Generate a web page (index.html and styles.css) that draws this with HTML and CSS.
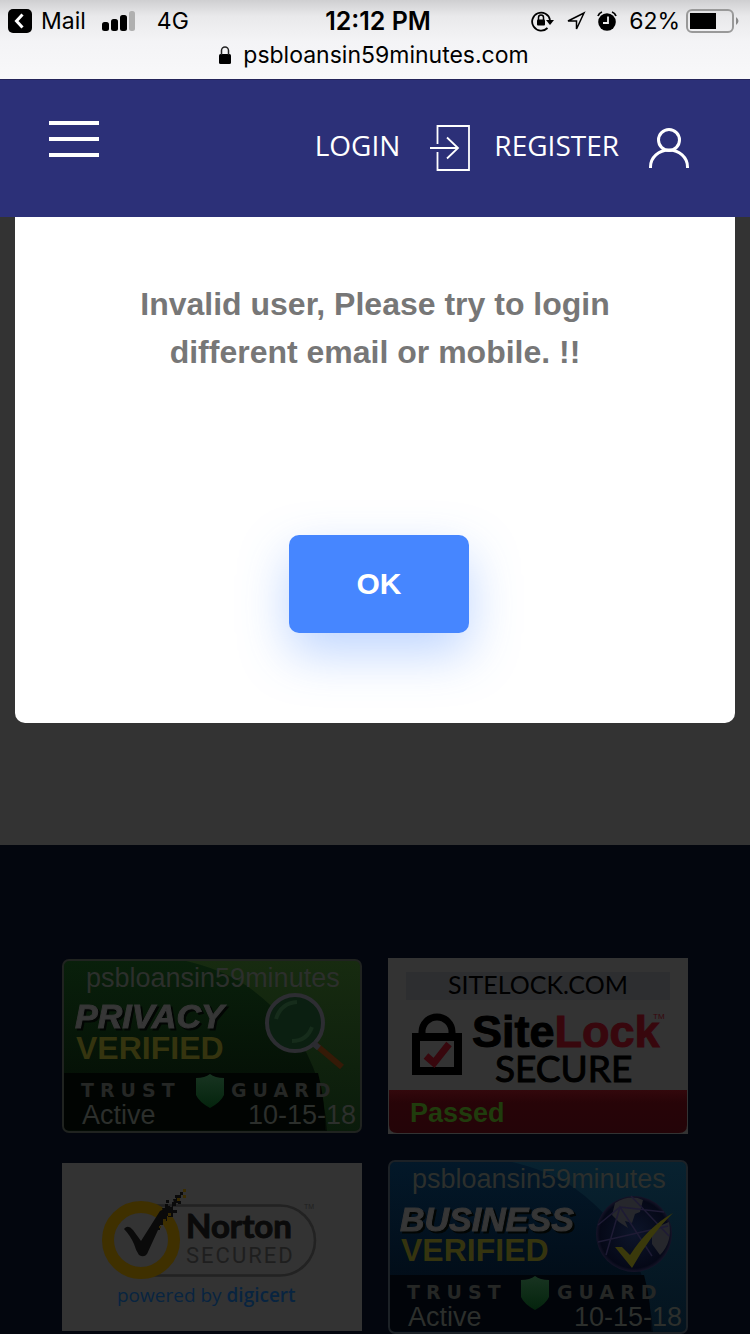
FILE: index.html
```html
<!DOCTYPE html>
<html lang="en">
<head>
<meta charset="utf-8">
<meta name="viewport" content="width=device-width, initial-scale=1">
<title>psbloansin59minutes.com</title>
<link rel="stylesheet" href="styles.css">
</head>
<body>
<div class="chrome">
  <div class="status">
    <div class="status-left">
      <button class="back" type="button">
        <svg width="24" height="24" viewBox="0 0 24 24" aria-hidden="true"><rect width="24" height="24" rx="5"/><path d="M14.500 5.500L8.500 12L14.500 18.500" fill="none" stroke="#fff" stroke-width="3"/></svg>
        Mail
      </button>
      <svg width="34" height="20" viewBox="0 0 34 20" aria-hidden="true"><rect y="11" width="7" height="9" rx="2.500"/><rect x="9" y="8" width="7" height="12" rx="2.500"/><rect x="18" y="4" width="7" height="16" rx="2.500"/><rect x="27" width="6" height="20" rx="2.500" fill="#b0b0b0"/></svg>
      <span class="network">4G</span>
    </div>
    <span class="time">12:12 PM</span>
    <div class="status-right">
      <svg class="lock-rotate" width="24" height="22" viewBox="0 0 24 22" aria-hidden="true"><path d="M16.500 18A9 9 0 1 1 19 10" fill="none" stroke="#000" stroke-width="1.800"/><path d="M15 10H23L19 15Z"/><rect x="6" y="9.500" width="8" height="6" rx="1"/><path d="M7.500 10V7.500a2.500 2.500 0 0 1 5 0V10" fill="none" stroke="#000" stroke-width="1.500"/></svg>
      <svg class="locate" width="20" height="20" viewBox="0 0 20 20" aria-hidden="true"><path d="M18 2L2 10H10.500V18Z" fill="none" stroke="#000" stroke-width="1.500"/></svg>
      <svg class="alarm" width="20" height="20" viewBox="0 0 20 20" aria-hidden="true"><circle cx="10" cy="11" r="8.800"/><path d="M1 5Q2 2 5 1M19 5Q18 2 15 1" fill="none" stroke="#000" stroke-width="1.800"/><path d="M11 5.500V12H6" fill="none" stroke="#eee" stroke-width="1.800"/></svg>
      <span>62%</span>
      <svg width="54" height="24" viewBox="0 0 54 24" aria-hidden="true"><rect x="1" y="1" width="46" height="22" rx="5" fill="none" stroke="#999" stroke-width="2"/><rect x="4" y="4" width="26" height="16"/><path d="M50 8Q55 12 50 16Z" fill="#888"/></svg>
    </div>
  </div>
  <div class="address">
    <svg width="12" height="18" viewBox="0 0 12 18" aria-hidden="true"><rect y="8" width="12" height="10" rx="1.500"/><path d="M2.500 9V4.500a3.500 3.500 0 0 1 7 0V9" fill="none" stroke="#222" stroke-width="1.500"/></svg>
    <span>psbloansin59minutes.com</span>
  </div>
</div>

<header class="site-header">
  <button class="menu" type="button" aria-label="Menu"><span></span><span></span><span></span></button>
  <nav class="account">
    <a href="#login">LOGIN
      <svg width="40" height="46" viewBox="0 0 40 46" aria-hidden="true"><g fill="none" stroke="#fff" stroke-width="1.800"><path d="M7.500 19V1H39V45H7.500V27"/><path d="M0 23H27M17 12.500L28 23L17 33.500"/></g></svg>
    </a>
    <a href="#register">REGISTER
      <svg width="40" height="42" viewBox="0 0 40 42" aria-hidden="true"><g fill="none" stroke="#fff" stroke-width="3"><circle cx="20" cy="13" r="10.500"/><path d="M1.500 41V40A18.500 17 0 0 1 38.500 40V41"/></g></svg>
    </a>
  </nav>
</header>

<main class="page">
  <section class="dialog" role="alertdialog" aria-labelledby="message">
    <h2 id="message" class="message">Invalid user, Please try to login different email or mobile. !!</h2>
    <div class="actions"><button class="ok" type="button">OK</button></div>
  </section>
</main>

<footer class="seals">
  <svg class="seal" viewBox="0 0 300 174" role="img" aria-label="Privacy verified">
    <defs>
      <linearGradient id="green" x1="0" y1="0" x2="0" y2="1"><stop offset="0" stop-color="#09200b"/><stop offset="1" stop-color="#030a04"/></linearGradient>
      <linearGradient id="lime" x1="0" y1="0" x2="0" y2="1"><stop offset="0" stop-color="#172b10"/><stop offset="1" stop-color="#0a1b0b"/></linearGradient>
      <linearGradient id="shield" x1="0" y1="0" x2="0" y2="1"><stop offset="0" stop-color="#183421"/><stop offset="1" stop-color="#04240d"/></linearGradient>
    </defs>
    <rect x="1" y="1" width="298" height="172" rx="6" fill="url(#green)"/>
    <path d="M120 1H293Q299 1 299 7V167Q299 173 293 173H265Q260 80 185 27Q160 10 120 1Z" fill="url(#lime)"/>
    <path d="M2 114H256Q263 140 263 171H2Z" fill="#010402"/>
    <rect x="1" y="1" width="298" height="172" rx="6" fill="none" stroke="#202320" stroke-width="2"/>
    <circle cx="233" cy="64" r="28" fill="#0b1f11" stroke="#2d2d32" stroke-width="4"/>
    <path d="M214 60Q219 44 235 43M250 68Q245 82 230 82" fill="none" stroke="#162c1b" stroke-width="4"/>
    <path d="M254 86L280 108" stroke="#351a07" stroke-width="6"/><path d="M251 84L257 89" stroke="#2b2b30" stroke-width="6"/>
    <text class="domain" x="24" y="28">psbloansin59minutes</text>
    <text class="impact" x="13" y="69">PRIVACY</text>
    <text class="verified" x="14" y="100">VERIFIED</text>
    <text class="brand" x="19" y="138">TRUST</text><text class="brand" x="169" y="138">GUARD</text>
    <path d="M134 119Q143 119 148 115Q153 119 162 119V136Q159 143 148 149Q137 143 134 136Z" fill="url(#shield)"/>
    <text class="domain" x="20" y="165">Active</text><text class="domain end" x="294" y="165">10-15-18</text>
  </svg>

  <svg class="seal" viewBox="0 0 300 176" role="img" aria-label="SiteLock secure">
    <defs><linearGradient id="red" x1="0" y1="0" x2="0" y2="1"><stop offset="0" stop-color="#33080c"/><stop offset="0.300" stop-color="#270408"/><stop offset="1" stop-color="#240408"/></linearGradient></defs>
    <rect width="300" height="176" fill="#333"/>
    <rect x="18" y="14" width="264" height="28" fill="#2d2e30"/>
    <text class="site-domain" x="60" y="36">SITELOCK.COM</text>
    <path d="M34 76V74A15 15 0 0 1 64 74V76" fill="none" stroke="#000" stroke-width="7"/>
    <rect x="28" y="79" width="42" height="34" fill="none" stroke="#000" stroke-width="8"/>
    <path d="M38 98L46 105L61 86" fill="none" stroke="#38070d" stroke-width="7"/>
    <text class="sitelock" x="84" y="89">Site<tspan class="lock-red">Lock</tspan></text>
    <text class="tm lock-red" x="265" y="61">TM</text>
    <text class="secure" x="107" y="124">SECURE</text>
    <path d="M1 132H299V167Q299 175 291 175H9Q1 175 1 167Z" fill="url(#red)"/>
    <text class="passed" x="22" y="164">Passed</text>
  </svg>

  <svg class="seal" viewBox="0 0 300 168" role="img" aria-label="Norton secured">
    <rect width="300" height="168" fill="#333"/>
    <path d="M92 42.500H218A35 35 0 0 1 218 112.500H92" fill="none" stroke="#222" stroke-width="2.500"/>
    <circle cx="79" cy="77" r="33" fill="#333" stroke="#3f3000" stroke-width="12"/>
    <path d="M62 66Q66 61 71 67L79 78L98 48L102 46L104 43H108V46H111V50H108V53H105V58H101V62H98V67H96L85 91Q82 95 77 92Q74 88 72 81Q68 72 62 66Z" fill="#0a0a0a"/>
    <path d="M100 45h3v-4h3v3h4v-5h4v4h-3v4h4v3h-4v4h-5v-3h-4zM104 37h3v3h-3zM111 36h3v-3h4v3h-2v4h-4zM116 38h3v3h-3zM113 32h6v3h-6zM118 29h3v3h-3z" fill="#0a0a0a"/>
    <path d="M121 26h3v3h-3zM121 32h3v3h-3zM115 35h3v3h-3zM106 50h3v3h-3zM101 56h3v3h-3zM97 63h2v2h-2z" fill="#3b2d02"/>
    <text class="norton" x="124" y="75">Norton</text>
    <text class="secured" x="124" y="100">SECURED</text>
    <text class="norton-tm" x="242" y="46">TM</text>
    <text class="powered" x="55" y="139">powered by <tspan class="digicert">digicert</tspan></text>
  </svg>

  <svg class="seal" viewBox="0 0 300 174" role="img" aria-label="Business verified">
    <defs>
      <linearGradient id="navy" x1="0" y1="0" x2="0" y2="1"><stop offset="0" stop-color="#031829"/><stop offset="1" stop-color="#010811"/></linearGradient>
      <linearGradient id="cyan" x1="0" y1="0" x2="0" y2="1"><stop offset="0" stop-color="#082230"/><stop offset="1" stop-color="#04131e"/></linearGradient>
      <radialGradient id="globe"><stop offset="0" stop-color="#0d152a"/><stop offset="0.900" stop-color="#050817"/><stop offset="1" stop-color="#161428"/></radialGradient>
    </defs>
    <rect x="1" y="1" width="298" height="172" rx="6" fill="url(#navy)"/>
    <path d="M120 1H293Q299 1 299 7V167Q299 173 293 173H265Q260 80 185 27Q160 10 120 1Z" fill="url(#cyan)"/>
    <path d="M2 115H256Q263 140 263 171H2Z" fill="#010409"/>
    <rect x="1" y="1" width="298" height="172" rx="6" fill="none" stroke="#1c2126" stroke-width="2"/>
    <circle cx="246" cy="74" r="38" fill="url(#globe)"/>
    <path d="M227 43Q242 34 255 40L252 52L247 54L244 63L237 61L240 68L231 62L224 55ZM264 69L281 62Q285 82 272 95L264 84Z" fill="#26272c"/>
    <path d="M210 65L232 47L276 52M210 82L280 66M218 95L232 47L264 96M243 36L281 76" fill="none" stroke="#1e1b34" stroke-width="1.500"/>
    <path d="M227 87H234L242 95Q260 67 285 53Q263 74 244 108Z" fill="#3a390b"/>
    <text class="domain" x="24" y="28">psbloansin59minutes</text>
    <text class="impact" x="12" y="71">BUSINESS</text>
    <text class="verified" x="13" y="101">VERIFIED</text>
    <text class="brand" x="19" y="139">TRUST</text><text class="brand" x="169" y="139">GUARD</text>
    <path d="M133 120Q142 120 147 116Q152 120 161 120V137Q158 144 147 150Q136 144 133 137Z" fill="url(#shield)"/>
    <text class="domain" x="20" y="166">Active</text><text class="domain end" x="294" y="166">10-15-18</text>
  </svg>
</footer>
</body>
</html>
```
FILE: styles.css
```css
* { box-sizing: border-box; }
body {
  margin: 0;
  background: #333;
  font-family: "Liberation Sans", Arial, sans-serif;
}
button {
  margin: 0;
  padding: 0;
  border: 0;
  background: none;
  font: inherit;
  color: inherit;
}
svg { display: block; flex: none; }

/* Browser chrome */
.chrome {
  padding: 4px 10px 7px 8px;
  border-bottom: 1px solid #24245a;
  background: linear-gradient(#cfcfd1 0, #e9e9eb 16px, #f4f4f6 42px, #f8f8fa 100%);
  font-family: Inter, sans-serif;
  font-size: 23px;
  line-height: 34px;
  color: #000;
}
.status {
  display: grid;
  grid-template-columns: 1fr auto 1fr;
  align-items: center;
}
.status-left, .status-right, .back, .address {
  display: flex;
  align-items: center;
}
.status-left { gap: 16px; }
.back { gap: 9px; }
.network { padding-left: 5px; }
.time {
  padding-left: 8px;
  font-size: 25px;
  font-weight: 600;
}
.status-right { justify-content: flex-end; }
.lock-rotate { margin-right: 11px; }
.locate { margin-right: 11px; }
.alarm { margin-right: 12px; }
.status-right span { margin-right: 6px; }
.address {
  justify-content: center;
  gap: 12px;
}

/* Site header */
.site-header {
  display: flex;
  justify-content: space-between;
  align-items: flex-start;
  padding: 41px 61px 46px 49px;
  background: #2c3078;
  color: #fff;
}
.menu {
  display: flex;
  flex-direction: column;
  gap: 12px;
  width: 50px;
}
.menu span {
  height: 4px;
  background: #fff;
}
.account {
  display: flex;
  gap: 24px;
  padding-top: 4px;
}
.account a {
  display: flex;
  align-items: flex-start;
  gap: 30px;
  height: 46px;
  font-family: "Open Sans", sans-serif;
  font-size: 28px;
  line-height: 40px;
  color: inherit;
  text-decoration: none;
}
.account svg { align-self: center; }

/* Alert */
.page { padding: 0 15px 122px; }
.dialog {
  padding: 63px 20px 90px;
  border-radius: 0 0 10px 10px;
  background: #fff;
}
.message {
  max-width: 520px;
  margin: 0 auto 159px;
  font-size: 32px;
  line-height: 48px;
  text-align: center;
  color: #777;
}
.actions {
  display: flex;
  justify-content: center;
  padding-left: 8px;
}
.ok {
  min-width: 180px;
  padding: 31px 20px;
  border-radius: 10px;
  background: #4686ff;
  box-shadow: 0 20px 50px rgba(70, 134, 255, 0.35);
  font-size: 30px;
  font-weight: 700;
  line-height: 36px;
  color: #fff;
}

/* Trust seals */
.seals {
  display: grid;
  grid-template-columns: 1fr 1fr;
  align-items: center;
  gap: 26px;
  padding: 113px 62px 0;
  background: #03060e;
}
.seal { width: 100%; }
.domain {
  font-size: 27px;
  fill: #2c2f2c;
}
.end { text-anchor: end; }
.impact {
  font-size: 34px;
  font-weight: 700;
  font-style: italic;
  fill: #363636;
  stroke: #363636;
  filter: drop-shadow(2px 2px 0 #020503);
}
.verified {
  font-size: 32px;
  font-weight: 700;
  fill: #35340f;
}
.brand {
  font-family: "DejaVu Sans", sans-serif;
  font-size: 19px;
  font-weight: 700;
  letter-spacing: 6px;
  fill: #252725;
}
.site-domain {
  font-family: Lato, sans-serif;
  font-size: 25px;
}
.sitelock {
  font-size: 45px;
  font-weight: 700;
  stroke: #000;
}
.lock-red { fill: #38070d; stroke: #38070d; }
.tm {
  font-size: 8px;
  stroke: none;
}
.secure {
  font-family: Lato, sans-serif;
  font-size: 37px;
  stroke: #000;
}
.passed {
  font-size: 27px;
  font-weight: 700;
  fill: #203c0d;
}
.norton {
  font-family: Lato, sans-serif;
  font-size: 33px;
  font-weight: 700;
  fill: #0a0a0a;
  stroke: #0a0a0a;
}
.secured {
  font-family: Roboto, sans-serif;
  font-size: 22px;
  letter-spacing: 2px;
  fill: #1e1e1e;
}
.norton-tm {
  font-size: 7px;
  fill: #202020;
}
.powered {
  font-family: "Open Sans", sans-serif;
  font-size: 19px;
  fill: #082440;
}
.digicert { font-weight: 600; }
```
